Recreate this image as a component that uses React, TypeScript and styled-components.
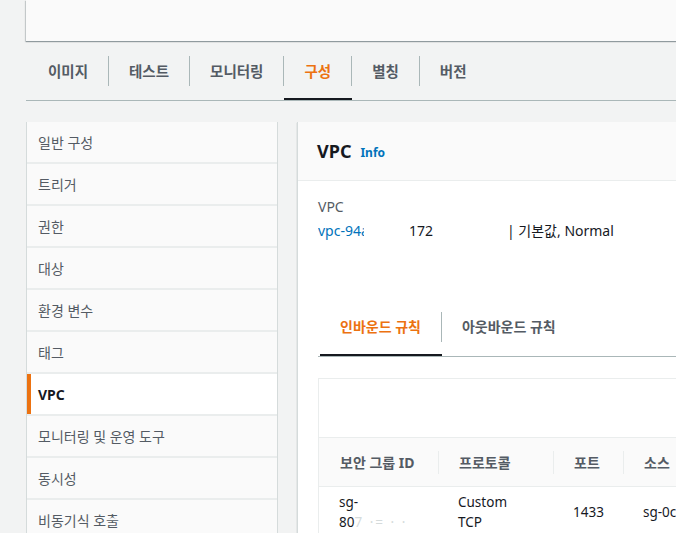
import React from 'react'
import styled, { createGlobalStyle } from 'styled-components'

const GlobalStyle = createGlobalStyle`
  html, body {
    margin: 0;
    padding: 0;
    background: #f2f3f3;
    overflow: hidden;
  }
  body {
    font-family: "Noto Sans", "Noto Sans CJK KR", sans-serif;
    color: #16191f;
  }
`

const Page = styled.div`
  width: 1000px;
  padding-left: 26px;
  box-sizing: border-box;
`

const TopCard = styled.div`
  height: 41px;
  background: #fafafa;
  box-shadow: 0 1px 1px 0 rgba(0, 28, 36, 0.3), -1px 1px 1px 0 rgba(0, 28, 36, 0.15);
`

const TabBar = styled.div<{ $top?: number }>`
  display: flex;
  padding-left: 2px;
  margin-top: ${({ $top }) => $top ?? 0}px;
  border-bottom: 1px solid #aab7b8;
`

const Tab = styled.div<{ $active?: boolean }>`
  height: 44px;
  box-sizing: border-box;
  box-shadow: ${({ $active }) => ($active ? 'inset 0 -2px 0 #16191f' : 'none')};
`

const TabLabel = styled.div<{ $active?: boolean; $last?: boolean; $size?: number }>`
  padding: 0 20px;
  height: 30px;
  line-height: 30px;
  font-size: ${({ $size }) => $size ?? 14.5}px;
  font-weight: 700;
  color: ${({ $active }) => ($active ? '#ec7211' : '#545b64')};
  border-right: ${({ $last }) => ($last ? 'none' : '1px solid #aab7b8')};
  white-space: nowrap;
`

const Columns = styled.div`
  display: flex;
  align-items: flex-start;
  gap: 19px;
  margin-top: 21px;
`

const Nav = styled.nav`
  width: 252px;
  flex: none;
  box-sizing: border-box;
  border-left: 1px solid #d5dbdb;
  border-right: 1px solid #d5dbdb;
  background: #eaeded;
`

const NavItem = styled.div<{ $active?: boolean }>`
  height: 40px;
  display: flex;
  align-items: center;
  margin-bottom: 2px;
  padding-left: ${({ $active }) => ($active ? '7px' : '11px')};
  border-left: ${({ $active }) => ($active ? '4px solid #ec7211' : 'none')};
  background: ${({ $active }) => ($active ? '#ffffff' : '#fafafa')};
  color: ${({ $active }) => ($active ? '#16191f' : '#545b64')};
  font-size: 14px;
  font-weight: ${({ $active }) => ($active ? 700 : 400)};
  white-space: nowrap;
`

const Panel = styled.section`
  flex: 1;
  background: #ffffff;
  border-left: 1px solid #d5dbdb;
  box-shadow: 0 1px 1px 0 rgba(0, 28, 36, 0.3);
`

const PanelHeader = styled.div`
  height: 58px;
  display: flex;
  align-items: center;
  padding: 0 19px;
  background: #fafafa;
  border-bottom: 1px solid #eaeded;
`

const PanelTitle = styled.h2`
  margin: 0;
  font-size: 18px;
  font-weight: 700;
  color: #16191f;
  line-height: 22px;
`

const InfoLink = styled.a`
  margin-left: 9px;
  margin-top: 3px;
  font-size: 12px;
  font-weight: 700;
  color: #0073bb;
`

const PanelBody = styled.div`
  padding: 16px 20px 0;
`

const FieldLabel = styled.div`
  font-size: 14px;
  line-height: 20px;
  color: #545b64;
`

const ValueRow = styled.div`
  display: flex;
  margin-top: 4px;
  font-size: 14px;
  line-height: 20px;
  color: #16191f;
  white-space: nowrap;
`

const Clip = styled.span<{ $w?: number; $link?: boolean }>`
  display: inline-block;
  overflow: hidden;
  width: ${({ $w }) => ($w ? `${$w}px` : 'auto')};
  color: ${({ $link }) => ($link ? '#0073bb' : 'inherit')};
`

const TableBox = styled.div`
  margin-top: 21px;
  border: 1px solid #eaeded;
  border-right: none;
`

const TableToolbar = styled.div`
  height: 58px;
  border-bottom: 1px solid #eaeded;
`

const Grid = styled.div<{ $head?: boolean }>`
  display: grid;
  grid-template-columns: 119px 115px 70px 1fr;
  align-items: center;
  background: ${({ $head }) => ($head ? '#fafafa' : '#ffffff')};
  border-bottom: ${({ $head }) => ($head ? '1px solid #eaeded' : 'none')};
  height: ${({ $head }) => ($head ? '48px' : 'auto')};
  padding: ${({ $head }) => ($head ? '0' : '5px 0')};
`

const HeadCell = styled.div<{ $divider?: boolean }>`
  border-left: ${({ $divider }) => ($divider ? '1px solid #eaeded' : 'none')};
  padding-left: ${({ $divider }) => ($divider ? '20px' : '21px')};
  line-height: 23px;
  font-size: 14px;
  font-weight: 700;
  color: #545b64;
  white-space: nowrap;
`

const Cell = styled.div`
  padding-left: 20px;
  font-size: 13.5px;
  line-height: 20px;
  color: #16191f;
  white-space: nowrap;
`

const Faint = styled.span`
  color: #d5dbdb;
  letter-spacing: 2px;
`

const mainTabs = ['이미지', '테스트', '모니터링', '구성', '별칭', '버전']
const navItems = [
  '일반 구성',
  '트리거',
  '권한',
  '대상',
  '환경 변수',
  '태그',
  'VPC',
  '모니터링 및 운영 도구',
  '동시성',
  '비동기식 호출',
  '데이터베이스 프록시',
]
const ruleTabs = ['인바운드 규칙', '아웃바운드 규칙']
const columns = ['보안 그룹 ID', '프로토콜', '포트', '소스']

export default function App() {
  return (
    <>
      <GlobalStyle />
      <Page>
        <TopCard />
        <TabBar $top={15}>
          {mainTabs.map((t, i) => (
            <Tab key={t} $active={t === '구성'}>
              <TabLabel $active={t === '구성'} $last={i === mainTabs.length - 1}>
                {t}
              </TabLabel>
            </Tab>
          ))}
        </TabBar>
        <Columns>
          <Nav>
            {navItems.map((n) => (
              <NavItem key={n} $active={n === 'VPC'}>
                {n}
              </NavItem>
            ))}
          </Nav>
          <Panel>
            <PanelHeader>
              <PanelTitle>VPC</PanelTitle>
              <InfoLink>Info</InfoLink>
            </PanelHeader>
            <PanelBody>
              <FieldLabel>VPC</FieldLabel>
              <ValueRow>
                <Clip $w={46} $link>vpc-94a</Clip>
                <Clip $w={45} />
                <Clip $w={98}>172</Clip>
                <Clip>| 기본값, Normal</Clip>
              </ValueRow>
              <TabBar $top={71}>
                {ruleTabs.map((t, i) => (
                  <Tab key={t} $active={i === 0}>
                    <TabLabel $size={14} $active={i === 0} $last={i === ruleTabs.length - 1}>
                      {t}
                    </TabLabel>
                  </Tab>
                ))}
              </TabBar>
              <TableBox>
                <TableToolbar />
                <Grid $head>
                  {columns.map((c, i) => (
                    <HeadCell key={c} $divider={i > 0}>
                      {c}
                    </HeadCell>
                  ))}
                </Grid>
                <Grid>
                  <Cell>
                    sg-
                    <br />
                    80<Faint>7 ·= · ·</Faint>
                  </Cell>
                  <Cell>
                    Custom
                    <br />
                    TCP
                  </Cell>
                  <Cell>1433</Cell>
                  <Cell>sg-0c1f2e3d</Cell>
                </Grid>
              </TableBox>
            </PanelBody>
          </Panel>
        </Columns>
      </Page>
    </>
  )
}
